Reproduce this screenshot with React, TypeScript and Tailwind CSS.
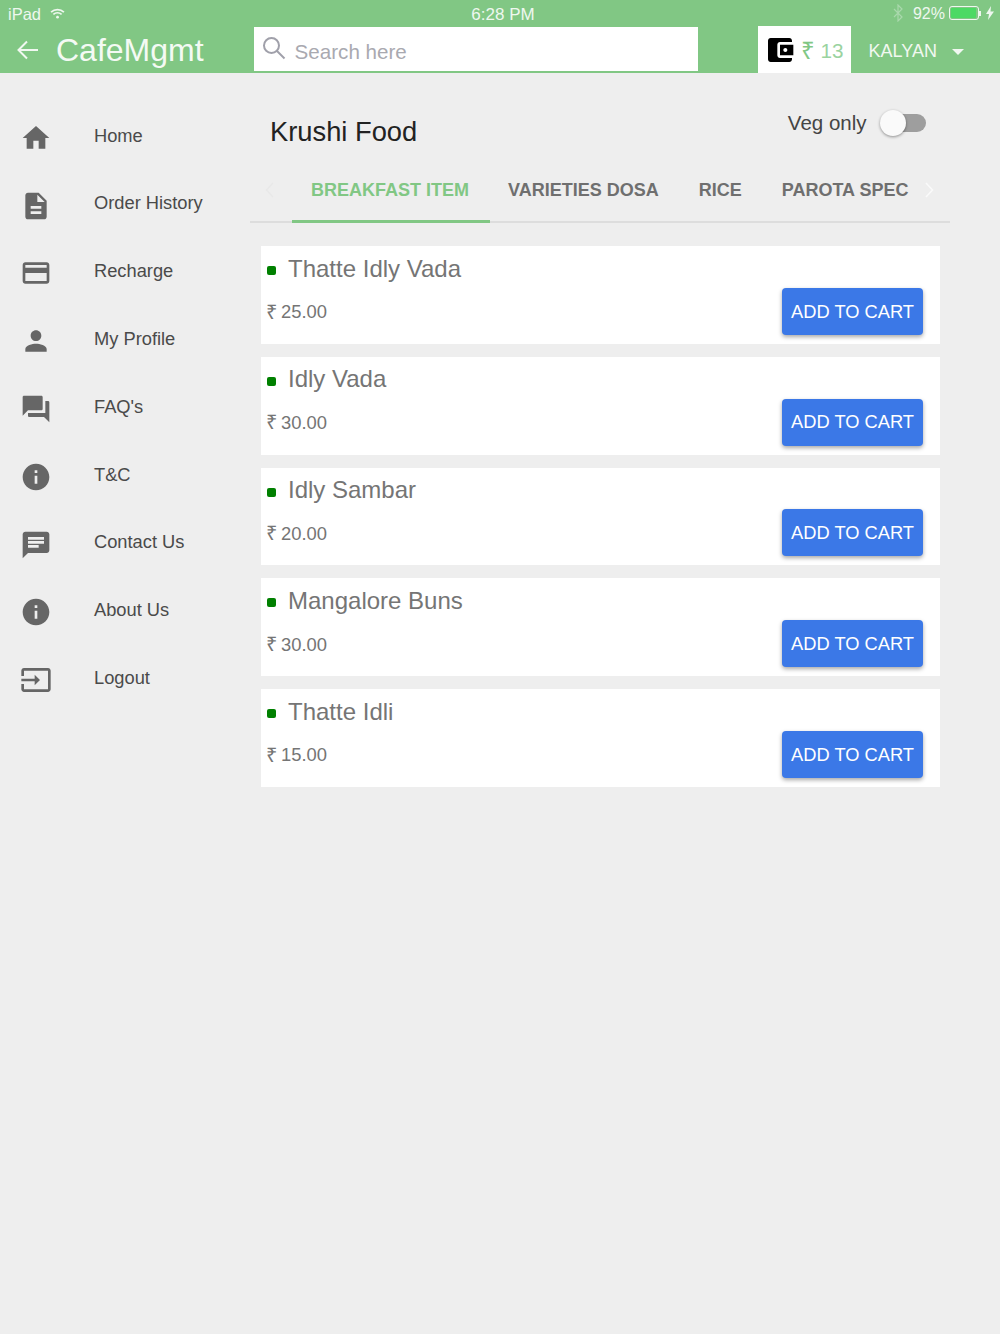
import React from "react"

const menu = [
  { label: "Home", d: "M10 20v-6h4v6h5v-8h3L12 3 2 12h3v8z" },
  { label: "Order History", d: "M14 2H6c-1.1 0-1.99.9-1.99 2L4 20c0 1.1.89 2 1.99 2H18c1.1 0 2-.9 2-2V8l-6-6zm2 16H8v-2h8v2zm0-4H8v-2h8v2zm-3-5V3.5L18.5 9H13z" },
  { label: "Recharge", d: "M20 4H4c-1.11 0-1.99.89-1.99 2L2 18c0 1.11.89 2 2 2h16c1.11 0 2-.89 2-2V6c0-1.11-.89-2-2-2zm0 14H4v-6h16v6zm0-10H4V6h16v2z" },
  { label: "My Profile", d: "M12 12c2.21 0 4-1.79 4-4s-1.79-4-4-4-4 1.79-4 4 1.79 4 4 4zm0 2c-2.67 0-8 1.34-8 4v2h16v-2c0-2.66-5.33-4-8-4z" },
  { label: "FAQ's", d: "M21 6h-2v9H6v2c0 .55.45 1 1 1h11l4 4V7c0-.55-.45-1-1-1zm-4 6V3c0-.55-.45-1-1-1H3c-.55 0-1 .45-1 1v14l4-4h10c.55 0 1-.45 1-1z" },
  { label: "T&C", d: "M12 2C6.48 2 2 6.48 2 12s4.48 10 10 10 10-4.48 10-10S17.52 2 12 2zm1 15h-2v-6h2v6zm0-8h-2V7h2v2z" },
  { label: "Contact Us", d: "M20 2H4c-1.1 0-1.99.9-1.99 2L2 22l4-4h14c1.1 0 2-.9 2-2V4c0-1.1-.9-2-2-2zM6 9h12v2H6V9zm8 5H6v-2h8v2zm4-6H6V6h12v2z" },
  { label: "About Us", d: "M12 2C6.48 2 2 6.48 2 12s4.48 10 10 10 10-4.48 10-10S17.52 2 12 2zm1 15h-2v-6h2v6zm0-8h-2V7h2v2z" },
  { label: "Logout", d: "M21 3.01H3c-1.1 0-2 .9-2 2V9h2V4.99h18v14.03H3V15H1v4.01c0 1.1.9 1.98 2 1.98h18c1.1 0 2-.88 2-1.98v-14c0-1.11-.9-2-2-2zM11 16l4-4-4-4v3H1v2h10v3z" },
]

const items = [
  { name: "Thatte Idly Vada", price: "25.00" },
  { name: "Idly Vada", price: "30.00" },
  { name: "Idly Sambar", price: "20.00" },
  { name: "Mangalore Buns", price: "30.00" },
  { name: "Thatte Idli", price: "15.00" },
]

function MenuRow({ label, d }: { label: string; d: string }) {
  return (
    <div className="h-[67.8px] flex items-center">
      <svg viewBox="0 0 24 24" className="w-8 h-8 ml-[20px] fill-[#666666] shrink-0">
        <path d={d} />
      </svg>
      <span className="ml-[42px] text-[18.3px] text-[#4a4a4a] -mt-[5px]">{label}</span>
    </div>
  )
}

function ItemCard({ name, price }: { name: string; price: string }) {
  return (
    <div className="h-[97.8px] bg-white flex justify-between pl-[6px] pr-[17px] pb-[9px]">
      <div>
        <div className="flex items-center mt-[8px] h-[29px]">
          <span className="w-[9px] h-[9px] rounded-[2px] bg-[#008000] mt-[4px]" />
          <span className="ml-[12px] text-[24px] text-[#757575]">{name}</span>
        </div>
        <div className="flex items-center mt-[17px] h-[24px] text-[18.4px] text-[#757575]">
          <span className="w-[15px] -ml-[1px] text-[20px] -mt-[1px]">₹</span>
          <span>{price}</span>
        </div>
      </div>
      <button className="self-end w-[141px] h-[47px] rounded-[4px] bg-[#3b78e7] text-white text-[18.3px] shadow-[0_2px_4px_rgba(0,0,0,0.35)]">
        ADD TO CART
      </button>
    </div>
  )
}

export default function App() {
  return (
    <div className="min-h-screen bg-[#eeeeee] font-['Liberation_Sans',sans-serif]">
      <header className="h-[73px] bg-[#81c784] text-white">
        <div className="h-[26px] flex items-center justify-between pl-[8px] pr-[6px] pt-[2px] text-[#eef7ef]">
          <div className="flex items-center w-[340px]">
            <span className="text-[16.5px]">iPad</span>
            <svg viewBox="0 0 16 12" className="w-[15px] h-[11px] ml-[9px] -mt-[2px] fill-none stroke-[#eef7ef] stroke-2">
              <path d="M1 4.5c4-3.6 10-3.6 14 0M3.5 7c2.600-2.200 6.400-2.200 9 0" />
              <circle cx="8" cy="10" r="1.500" className="fill-[#eef7ef] stroke-none" />
            </svg>
          </div>
          <span className="text-[17px] ml-[4px] mt-[1px]">6:28 PM</span>
          <div className="flex items-center w-[340px] justify-end -mt-[2px]">
            <svg viewBox="0 0 10 18" className="w-[10px] h-[18px] fill-none stroke-[#a9d8ac] stroke-[1.2]">
              <path d="M1 5l8 8-4 4V1l4 4-8 8" />
            </svg>
            <span className="ml-[10px] mt-[2px] text-[16px]">92%</span>
            <div className="ml-[4px] w-[30px] h-[14px] rounded-[3px] border border-[#eef7ef] p-[1px]">
              <div className="w-[25px] h-full rounded-[1px] bg-[#4cd964]" />
            </div>
            <div className="w-[2px] h-[5px] bg-[#eef7ef] mr-[5px]" />
            <svg viewBox="0 0 8 14" className="w-[8px] h-[14px] fill-[#eef7ef]">
              <path d="M5 0L0 8h3l-1 6 6-8.500H4.500z" />
            </svg>
          </div>
        </div>
        <div className="h-[47px] flex">
          <svg viewBox="0 0 22 20" className="w-[22px] h-[20px] ml-[17px] mt-[14px] fill-none stroke-[#f1f8f1] stroke-2">
            <path d="M21 10H2M10 1.500L1.500 10l8.500 8.500" />
          </svg>
          <span className="ml-[17px] text-[32px] leading-[48px] text-[#f4faf4]">CafeMgmt</span>
          <div className="ml-[50px] mt-[1px] w-[444px] h-[44px] bg-white flex items-center">
            <svg viewBox="0 0 24 24" className="w-[24px] h-[24px] ml-[8px] -mt-[2px] fill-none stroke-[#a0a0aa] stroke-2">
              <circle cx="9.500" cy="9.500" r="7.500" />
              <path d="M15 15l7.500 7.500" />
            </svg>
            <span className="ml-[9px] mt-[6px] text-[20.6px] text-[#a9a9b0]">Search here</span>
          </div>
          <div className="ml-[60px] w-[93px] bg-white flex items-center">
            <svg viewBox="0 0 24 24" className="w-8 h-8 ml-[6px] fill-black shrink-0">
              <path d="M21 18v1c0 1.100-.9 2-2 2H5c-1.110 0-2-.9-2-2V5c0-1.100.89-2 2-2h14c1.100 0 2 .9 2 2v1h-9c-1.110 0-2 .9-2 2v8c0 1.100.89 2 2 2h9zm-9-2h10V8H12v8zm4-2.500c-.83 0-1.500-.67-1.500-1.500s.67-1.500 1.500-1.500 1.500.67 1.500 1.500-.67 1.500-1.500 1.500z" />
            </svg>
            <span className="ml-[5px] text-[24px] text-[#81c784] mt-[3px]">₹</span>
            <span className="ml-[6px] text-[20.7px] text-[#9ad3a0] mt-[2px]">13</span>
          </div>
          <span className="ml-[18px] text-[18px] leading-[50px] text-[#f1f8f1]">KALYAN</span>
          <span className="ml-[15px] mt-[23px] w-0 h-0 border-x-[6px] border-x-transparent border-t-[6px] border-t-[#f1f8f1]" />
        </div>
      </header>

      <div className="flex">
        <aside className="w-[250px] pt-[31px] shrink-0">
          {menu.map((m) => (
            <MenuRow key={m.label} label={m.label} d={m.d} />
          ))}
        </aside>

        <main className="w-[700px]">
          <div className="h-[97px] flex justify-between pl-[20px] pr-[24px]">
            <h1 className="mt-[42px] text-[27.3px] leading-[34px] text-[#222222]">Krushi Food</h1>
            <div className="flex items-start mt-[37px]">
              <span className="text-[20.5px] leading-[26px] text-[#444444]">Veg only</span>
              <div className="relative ml-[13.5px] w-[46px] h-[26px]">
                <div className="absolute right-0 top-[4px] w-[38px] h-[18px] rounded-full bg-[#9e9e9e]" />
                <div className="absolute left-0 top-0 w-[26px] h-[26px] rounded-full bg-[#fafafa] shadow-[0_1px_3px_rgba(0,0,0,0.4)]" />
              </div>
            </div>
          </div>

          <div className="h-[53px] border-b-2 border-[#dddddd] flex text-[18px] font-bold text-[#6f6f6f]">
            <svg viewBox="0 0 10 16" className="w-[10px] h-[16px] ml-[15px] mt-[12px] fill-none stroke-[#e8e8e8] stroke-[1.500]">
              <path d="M8 1L1.500 8 8 15" />
            </svg>
            <div className="ml-[17px] w-[198px] h-[53px] pr-[2px] border-b-[3px] border-[#81c784] text-[#81c784] text-center leading-[40px]">
              BREAKFAST ITEM
            </div>
            <span className="ml-[18px] leading-[40px]">VARIETIES DOSA</span>
            <span className="ml-[40px] leading-[40px]">RICE</span>
            <span className="ml-[40px] leading-[40px]">PAROTA SPEC</span>
            <svg viewBox="0 0 10 16" className="w-[10px] h-[16px] ml-[16px] mt-[12px] fill-none stroke-[#fafafa] stroke-[1.500]">
              <path d="M2 1l6.500 7L2 15" />
            </svg>
          </div>

          <div className="mt-[23px] ml-[11px] w-[679px] flex flex-col gap-[13px]">
            {items.map((it) => (
              <ItemCard key={it.name} name={it.name} price={it.price} />
            ))}
          </div>
        </main>
      </div>
    </div>
  )
}
